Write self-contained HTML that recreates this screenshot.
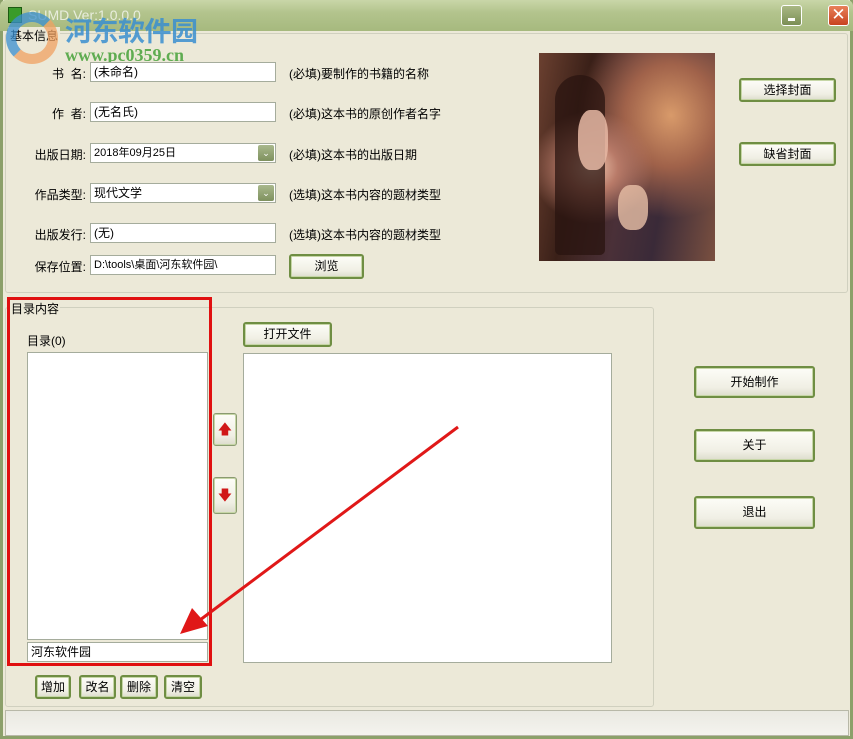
<!DOCTYPE html>
<html><head><meta charset="utf-8"><style>
*{box-sizing:border-box;margin:0;padding:0}
body{width:853px;height:739px;overflow:hidden;background:#ece9d8;font-family:"Liberation Sans","Noto Sans CJK SC",sans-serif;font-size:12px;color:#000;position:relative}
.a{position:absolute}
.inp{position:absolute;background:#fff;border:1px solid #a5ac9c;height:20px;padding:2px 3px;font-size:12px;line-height:14px;white-space:nowrap;overflow:hidden}
.lbl{position:absolute;text-align:right;width:86px;left:0;font-size:12px}
.hint{position:absolute;left:289px;font-size:12px}
.btn{position:absolute;background:linear-gradient(#fdfdf8,#f0efe4 70%,#dcdccc);border:2px solid #6f8e43;border-radius:3px;text-align:center;font-size:12px;box-shadow:inset 0 0 0 1px #c6d6a6}
.dd{position:absolute;right:1px;top:1px;width:16px;height:16px;background:linear-gradient(#a9b88c,#7e915e);border-radius:2px;color:#fff;font-size:9px;text-align:center;line-height:16px}
</style></head><body>
<div class="a" style="left:0;top:0;width:853px;height:739px;border:3px solid #8ca06a;border-top:none"></div>
<div class="a" style="left:0;top:0;width:853px;height:31px;background:linear-gradient(#c9d6a8,#b3c48d 40%,#a6b97e);border-radius:6px 6px 0 0"></div>
<div class="a" style="left:8px;top:7px;width:14px;height:16px;background:#3a9b2a;border:1px solid #1d5a12"></div>
<div class="a" style="left:28px;top:7px;color:#fff;font-size:14px;opacity:.7">SUMD Ver:1.0.0.0</div>
<div class="a" style="left:781px;top:5px;width:21px;height:21px;background:linear-gradient(#a9b884,#7b8f55);border:1px solid #fff;border-radius:3px"><div class="a" style="left:6px;top:12px;width:7px;height:3px;background:#fff"></div></div>
<div class="a" style="left:828px;top:5px;width:21px;height:21px;background:linear-gradient(#e8805a,#c8431f);border:1px solid #fff;border-radius:3px;color:#fff;font-size:17px;line-height:18px;text-align:center">✕</div>
<div class="a" style="left:5px;top:33px;width:843px;height:260px;border:1px solid #d0d0bf;border-radius:3px"></div>
<div class="a" style="left:8px;top:27px;background:#ece9d8;padding:0 2px;font-size:12px">基本信息</div>
<div class="a" style="left:6px;top:12px;width:52px;height:52px;border-radius:50%;border:10px solid #f0a262;border-top-color:#3a8fd0;border-left-color:#3a8fd0;opacity:.75"></div>
<div class="a" style="left:65px;top:10px;color:#3a8fd0;font-size:27px;font-weight:bold;font-family:'Noto Sans CJK SC',sans-serif;opacity:.85;letter-spacing:-0.5px">河东软件园</div>
<div class="a" style="left:65px;top:45px;color:#47a23a;font-size:18px;font-weight:bold;font-family:'Liberation Serif',serif;opacity:.85">www.pc0359.cn</div>

<div class="lbl" style="top:65px">书&nbsp; 名:</div><div class="inp" style="left:90px;top:62px;width:186px">(未命名)</div><div class="hint" style="top:65px">(必填)要制作的书籍的名称</div>
<div class="lbl" style="top:105px">作&nbsp; 者:</div><div class="inp" style="left:90px;top:102px;width:186px">(无名氏)</div><div class="hint" style="top:105px">(必填)这本书的原创作者名字</div>
<div class="lbl" style="top:146px">出版日期:</div><div class="inp" style="left:90px;top:143px;width:186px;font-size:11px">2018年09月25日<div class="dd">⌄</div></div><div class="hint" style="top:146px">(必填)这本书的出版日期</div>
<div class="lbl" style="top:186px">作品类型:</div><div class="inp" style="left:90px;top:183px;width:186px">现代文学<div class="dd">⌄</div></div><div class="hint" style="top:186px">(选填)这本书内容的题材类型</div>
<div class="lbl" style="top:226px">出版发行:</div><div class="inp" style="left:90px;top:223px;width:186px">(无)</div><div class="hint" style="top:226px">(选填)这本书内容的题材类型</div>
<div class="lbl" style="top:258px">保存位置:</div><div class="inp" style="left:90px;top:255px;width:186px;font-size:11px">D:\tools\桌面\河东软件园\</div>
<div class="btn" style="left:289px;top:254px;width:75px;height:25px;line-height:21px">浏览</div>

<div class="a" style="left:539px;top:53px;width:176px;height:208px;background:radial-gradient(ellipse at 30% 55%,#f0c8b0 0,#b87a68 15%,transparent 35%),radial-gradient(ellipse at 75% 30%,#d89a6a 0,#a0624a 25%,transparent 50%),linear-gradient(100deg,#6b4030 0,#3a2018 25%,#4a3038 50%,#3a2a38 70%,#7a5040 100%)"></div>
<div class="a" style="left:555px;top:75px;width:50px;height:180px;background:#2a1410;border-radius:25px 25px 5px 5px;opacity:.75"></div>
<div class="a" style="left:578px;top:110px;width:30px;height:60px;background:#e6b8a4;border-radius:40%;opacity:.85"></div>
<div class="a" style="left:618px;top:185px;width:30px;height:45px;background:#e8c0a8;border-radius:40%;opacity:.8"></div>
<div class="btn" style="left:739px;top:78px;width:97px;height:24px;line-height:20px">选择封面</div>
<div class="btn" style="left:739px;top:142px;width:97px;height:24px;line-height:20px">缺省封面</div>

<div class="a" style="left:5px;top:307px;width:649px;height:400px;border:1px solid #d0d0bf;border-radius:3px"></div>
<div class="a" style="left:10px;top:300px;background:#ece9d8;padding:0 1px">目录内容</div>
<div class="a" style="left:27px;top:332px">目录(0)</div>
<div class="a" style="left:27px;top:352px;width:181px;height:288px;background:#fff;border:1px solid #a5ac9c"></div>
<div class="inp" style="left:27px;top:642px;width:181px">河东软件园</div>
<div class="btn" style="left:213px;top:413px;width:24px;height:33px;border-width:1px;border-color:#8a9a70;color:#d01818;font-size:14px;line-height:30px">🡅</div>
<div class="btn" style="left:213px;top:477px;width:24px;height:37px;border-width:1px;border-color:#8a9a70;color:#d01818;font-size:14px;line-height:34px">🡇</div>
<div class="btn" style="left:243px;top:322px;width:89px;height:25px;line-height:21px">打开文件</div>
<div class="a" style="left:243px;top:353px;width:369px;height:310px;background:#fff;border:1px solid #a5ac9c"></div>
<div class="btn" style="left:35px;top:675px;width:36px;height:24px;line-height:20px">增加</div>
<div class="btn" style="left:79px;top:675px;width:37px;height:24px;line-height:20px">改名</div>
<div class="btn" style="left:120px;top:675px;width:38px;height:24px;line-height:20px">删除</div>
<div class="btn" style="left:164px;top:675px;width:38px;height:24px;line-height:20px">清空</div>
<div class="btn" style="left:694px;top:366px;width:121px;height:32px;line-height:28px">开始制作</div>
<div class="btn" style="left:694px;top:429px;width:121px;height:33px;line-height:29px">关于</div>
<div class="btn" style="left:694px;top:496px;width:121px;height:33px;line-height:29px">退出</div>
<div class="a" style="left:7px;top:297px;width:205px;height:369px;border:3px solid #e01010"></div>
<svg class="a" style="left:0;top:0" width="853" height="739"><line x1="458" y1="427" x2="200" y2="620" stroke="#e01818" stroke-width="3"/><polygon points="180,634 192,608 208,626" fill="#e01818"/></svg>
<div class="a" style="left:5px;top:710px;width:844px;height:26px;background:linear-gradient(#eae9e2,#f4f3ee);border:1px solid #b8b8a8"></div>
</body></html>
